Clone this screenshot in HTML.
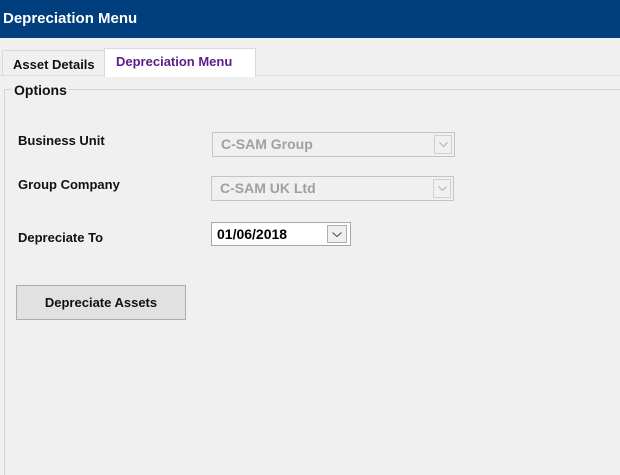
<!DOCTYPE html>
<html style="height:475px;overflow:hidden"><head><style>
body{margin:0;width:620px;height:475px;background:#f0f0f0;font-family:"Liberation Sans",Arial,sans-serif;position:relative;overflow:hidden;font-size:13px}
.a{position:absolute}
.title{left:0;top:0;width:620px;height:38px;background:#013e7e;color:#fff;font-weight:bold;font-size:15px;line-height:37px;padding-left:3px;box-sizing:border-box}
.lbl{font-weight:bold;font-size:13px;color:#111}
.cb{border:1px solid #c4c4c4;background:#f0f0f0;box-sizing:border-box;color:#a0a0a0;font-weight:bold;font-size:14px;padding-left:8px;line-height:23px}
.arr{position:absolute;right:2px;top:2px;width:18px;height:19px;border:1px solid #d0d0d0;box-sizing:border-box;background:#f0f0f0}
.arr svg,.darr svg{position:absolute;left:4px;top:6px}
</style></head><body>
<div class="a title">Depreciation Menu</div>
<div class="a" style="left:0;top:75px;width:620px;height:1px;background:#dadada"></div>
<div class="a" style="left:2px;top:50px;width:103px;height:26px;border:1px solid #d9d9d9;border-bottom:none;box-sizing:border-box;font-weight:bold;font-size:13px;line-height:28px;padding-left:10px;color:#111">Asset Details</div>
<div class="a" style="left:104px;top:48px;width:152px;height:29px;background:#fff;border:1px solid #d9d9d9;border-bottom:none;box-sizing:border-box;font-weight:bold;font-size:13px;line-height:26px;padding-left:11px;color:#5a1e8c">Depreciation Menu</div>
<div class="a" style="left:4px;top:89px;width:640px;height:400px;border:1px solid #d5d5d5;box-sizing:border-box"></div>
<div class="a lbl" style="left:12px;top:82px;background:#f0f0f0;padding:0 2px;font-size:14px">Options</div>
<div class="a lbl" style="left:18px;top:133px">Business Unit</div>
<div class="a lbl" style="left:18px;top:177px">Group Company</div>
<div class="a lbl" style="left:18px;top:230px">Depreciate To</div>
<div class="a cb" style="left:212px;top:132px;width:243px;height:25px">C-SAM Group<div class="arr"><svg width="9" height="5"><path d="M0.5 0.5L4.5 4.5L8.5 0.5" fill="none" stroke="#b0b0b0"/></svg></div></div>
<div class="a cb" style="left:211px;top:176px;width:243px;height:25px">C-SAM UK Ltd<div class="arr"><svg width="9" height="5"><path d="M0.5 0.5L4.5 4.5L8.5 0.5" fill="none" stroke="#b0b0b0"/></svg></div></div>
<div class="a" style="left:211px;top:222px;width:140px;height:24px;border:1px solid #a8a8a8;background:#fff;box-sizing:border-box;font-weight:bold;font-size:14px;line-height:22px;padding-left:5px;color:#000">01/06/2018
<div class="darr" style="position:absolute;right:3px;top:2px;width:20px;height:18px;border:1px solid #adadad;box-sizing:border-box;background:#f0f0f0"><svg width="10" height="5"><path d="M0.5 0.5L5 4.5L9.5 0.5" fill="none" stroke="#444"/></svg></div></div>
<div class="a" style="left:16px;top:285px;width:170px;height:35px;border:1px solid #adadad;background:#e1e1e1;box-sizing:border-box;text-align:center;line-height:33px;font-weight:bold;font-size:13px;color:#111">Depreciate Assets</div>
</body></html>
